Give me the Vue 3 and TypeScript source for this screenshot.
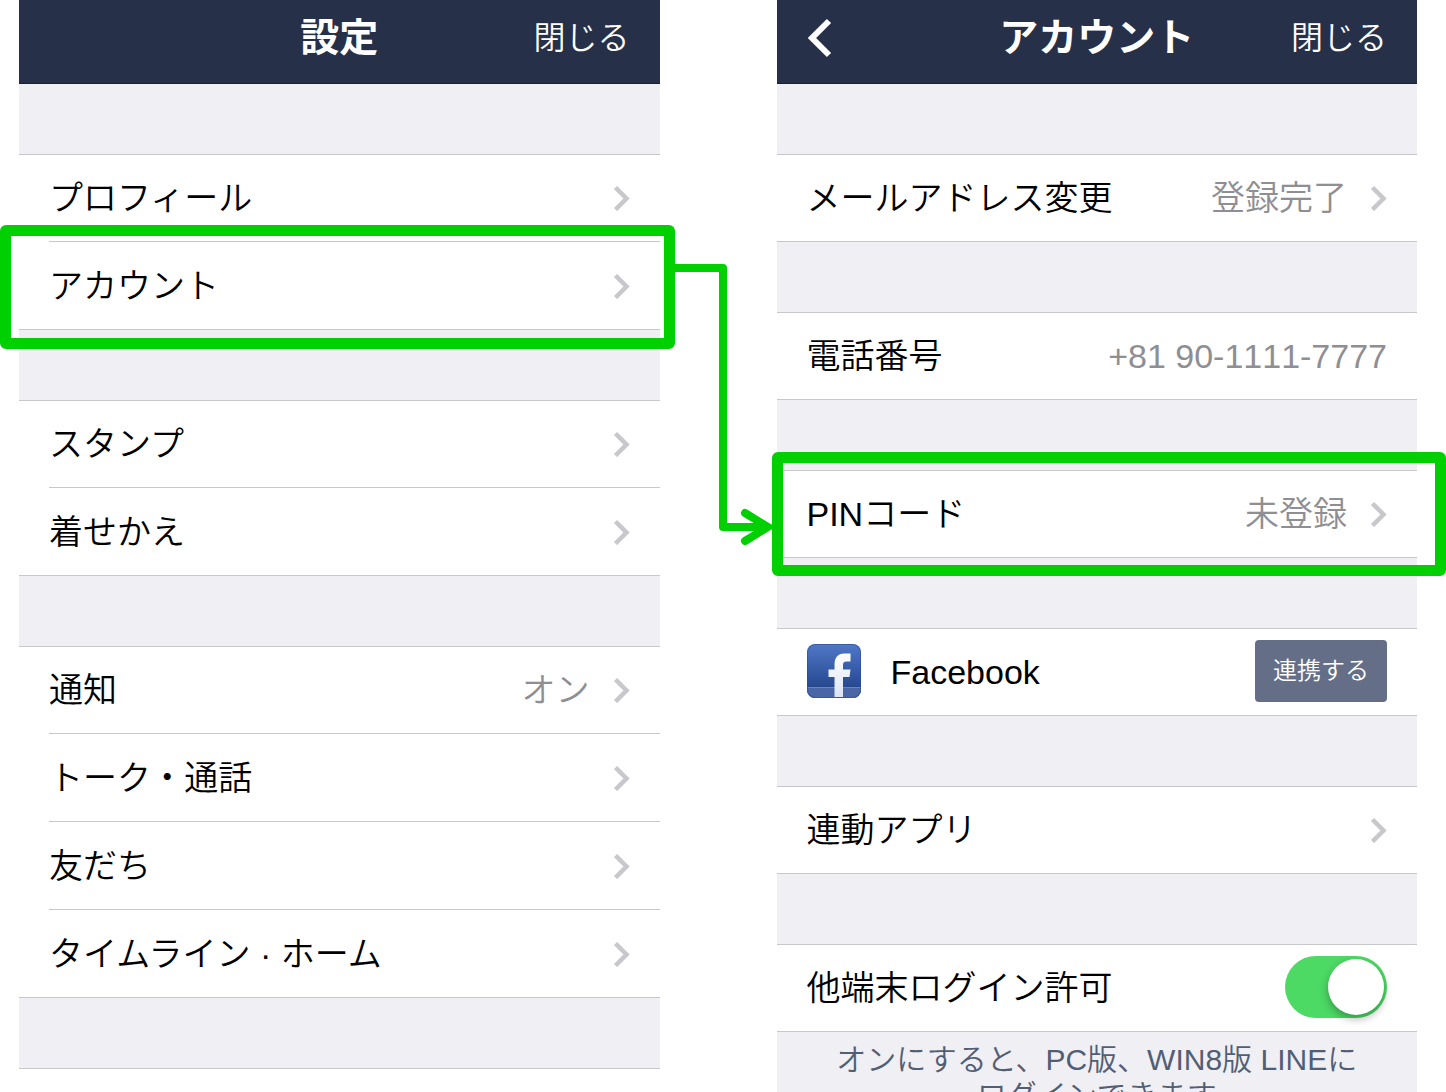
<script setup lang="ts">
import { ref } from 'vue'

interface Row {
  label: string
  value?: string
  kind?: 'link' | 'text' | 'facebook' | 'switch'
  mark?: 'from' | 'to'
}

interface Panel {
  title: string
  back: boolean
  groups: Row[][]
  note?: string[]
}

const allowLogin = ref(true)

const panels: Panel[] = [
  {
    title: '設定',
    back: false,
    groups: [
      [{ label: 'プロフィール' }, { label: 'アカウント', mark: 'from' }],
      [{ label: 'スタンプ' }, { label: '着せかえ' }],
      [
        { label: '通知', value: 'オン' },
        { label: 'トーク・通話' },
        { label: '友だち' },
        { label: 'タイムライン · ホーム' },
      ],
    ],
  },
  {
    title: 'アカウント',
    back: true,
    groups: [
      [{ label: 'メールアドレス変更', value: '登録完了' }],
      [{ label: '電話番号', value: '+81 90-1111-7777', kind: 'text' }],
      [{ label: 'PINコード', value: '未登録', mark: 'to' }],
      [{ label: 'Facebook', kind: 'facebook' }],
      [{ label: '連動アプリ' }],
      [{ label: '他端末ログイン許可', kind: 'switch' }],
    ],
    note: ['オンにすると、PC版、WIN8版 LINEに', 'ログインできます'],
  },
]

const isLink = (row: Row): boolean => !row.kind || row.kind === 'link'
</script>

<template>
  <main class="page" lang="ja">
    <section v-for="panel in panels" :key="panel.title" class="panel">
      <header class="bar">
        <button v-if="panel.back" class="back" type="button" aria-label="戻る">
          <svg width="26" height="40" viewBox="0 0 26 40" fill="none">
            <path d="M22 3 L5 20 L22 37" stroke="#fff" stroke-width="6" />
          </svg>
        </button>
        <h1 class="title">{{ panel.title }}</h1>
        <button class="close" type="button">閉じる</button>
      </header>

      <ul v-for="(group, g) in panel.groups" :key="g" class="group">
        <li v-for="row in group" :key="row.label" class="row">
          <component
            :is="isLink(row) ? 'a' : row.kind === 'switch' ? 'label' : 'div'"
            class="cell"
            :href="isLink(row) ? '#' : undefined"
          >
            <svg v-if="row.kind === 'facebook'" class="logo" width="54" height="54" viewBox="0 0 54 54">
              <defs>
                <linearGradient id="fb-blue" x1="0" y1="0" x2="0" y2="1">
                  <stop offset="0" stop-color="#5078c8" />
                  <stop offset="1" stop-color="#1c3c80" />
                </linearGradient>
                <linearGradient id="fb-white" x1="0" y1="0" x2="0" y2="1">
                  <stop offset="0" stop-color="#fff" />
                  <stop offset="1" stop-color="#dde3f4" />
                </linearGradient>
                <clipPath id="fb-clip"><rect width="54" height="54" rx="8" /></clipPath>
              </defs>
              <g clip-path="url(#fb-clip)">
                <rect width="54" height="54" fill="url(#fb-blue)" />
                <rect y="44" width="54" height="10" fill="#4a66a6" />
                <rect y="43" width="54" height="1" fill="#6c84b8" />
                <path
                  d="M27.5 53V33H21.5V25.500H27.500V21C27.500 13.500 31 9.500 37 9.500H43.500V17.500H39.500C37 17.500 36 18.500 36 21V25.500H43.500L42.500 33H36V53Z"
                  fill="url(#fb-white)"
                />
                <rect x=".5" y=".5" width="53" height="53" rx="8" fill="none" stroke="#2c4c90" stroke-opacity=".6" />
              </g>
            </svg>
            <span class="label">{{ row.label }}</span>
            <span v-if="row.value" class="value">{{ row.value }}</span>
            <svg v-if="isLink(row)" class="chevron" width="18" height="26" viewBox="0 0 18 26" fill="none">
              <path d="M3.500 2.500 L14.500 13.500 L3.500 24.500" stroke="#c7c7cc" stroke-width="4.500" />
            </svg>
            <button v-if="row.kind === 'facebook'" class="connect" type="button">連携する</button>
            <input v-if="row.kind === 'switch'" v-model="allowLogin" class="switch" type="checkbox" role="switch" />
          </component>
          <span v-if="row.mark" class="mark" :class="row.mark"></span>
          <svg v-if="row.mark === 'from'" class="arrow" width="100" height="286" viewBox="0 0 100 286" fill="none">
            <g stroke="#00d000" stroke-width="8">
              <path d="M0 8H49V267H90" stroke-linejoin="round" />
              <path d="M71 253L94 267L71 281" stroke-linecap="round" stroke-linejoin="miter" />
            </g>
          </svg>
        </li>
      </ul>

      <p v-if="panel.note" class="note">
        <template v-for="(line, n) in panel.note" :key="line"><br v-if="n" />{{ line }}</template>
      </p>
      <div v-else class="rest"></div>
    </section>
  </main>
</template>

<style>
body {
  margin: 0;
  background: #fff;
}
</style>

<style scoped>
.page {
  display: flex;
  gap: 117px;
  box-sizing: border-box;
  height: 100vh;
  padding: 0 29px 0 19px;
  overflow: hidden;
  font-family: 'Liberation Sans', 'Noto Sans CJK JP', sans-serif;
  font-size: 34px;
  font-weight: 350;
  line-height: 44px;
  color: #000;
}

.page * {
  box-sizing: border-box;
}

.panel {
  display: flex;
  flex: 1;
  flex-direction: column;
  min-width: 0;
  background: #efeff4;
}

.bar {
  display: grid;
  flex: none;
  grid-template-columns: 1fr auto 1fr;
  align-items: center;
  height: 84px;
  padding: 0 30px 8px;
  border-bottom: 1px solid #182036;
  background: #263048;
  color: #fff;
}

button {
  margin: 0;
  padding: 0;
  border: 0;
  background: none;
  color: #fff;
  font-family: inherit;
  font-weight: inherit;
}

.back {
  justify-self: start;
  height: 40px;
}

.back svg {
  display: block;
}

.title {
  grid-column: 2;
  margin: 0;
  font-size: 39px;
  font-weight: 700;
  line-height: 44px;
}

.close {
  grid-column: 3;
  justify-self: end;
  font-size: 32px;
  line-height: 44px;
}

.group {
  flex: none;
  margin: 70px 0 0;
  padding: 0;
  list-style: none;
}

.row {
  position: relative;
  display: flex;
  height: 88px;
  padding-left: 30px;
  background: #fff;
}

.row:first-child {
  border-top: 1px solid #c8c7cc;
}

.row:last-child {
  border-bottom: 1px solid #c8c7cc;
}

.cell {
  display: flex;
  flex: 1;
  align-items: center;
  padding-right: 30px;
  color: inherit;
  text-decoration: none;
}

.row:not(:last-child) .cell {
  border-bottom: 1px solid #c8c7cc;
}

.logo,
.connect,
.switch {
  margin: 0 0 2px;
}

.logo {
  margin-right: 30px;
}

.label {
  flex: 1;
  white-space: nowrap;
}

.value {
  color: #8e8e93;
  font-kerning: none;
}

.chevron {
  margin-left: 22px;
}

.connect {
  width: 132px;
  height: 62px;
  padding-bottom: 6px;
  border-radius: 4px;
  background: #646f87;
  font-size: 24px;
}

.switch {
  width: 102px;
  height: 62px;
  padding: 3px;
  border-radius: 31px;
  appearance: none;
  background: #e5e5ea;
}

.switch::before {
  display: block;
  width: 56px;
  height: 56px;
  border-radius: 50%;
  background: #fff;
  box-shadow: 0 4px 8px rgba(0, 0, 0, 0.3);
  content: '';
}

.switch:checked {
  background: #4cd964;
}

.switch:checked::before {
  margin-left: auto;
}

.mark {
  position: absolute;
  z-index: 1;
  border: 11px solid #00d000;
  border-radius: 6px;
  pointer-events: none;
}

.mark.from {
  inset: -17px -15px -20px -19px;
}

.mark.to {
  inset: -19px -29px -19px -5px;
}

.arrow {
  position: absolute;
  top: 18px;
  left: calc(100% + 14px);
  z-index: 1;
}

.note {
  margin: 0;
  padding: 10px 30px;
  color: #525e74;
  font-size: 30px;
  line-height: 36px;
  text-align: center;
}

.rest {
  flex: 1;
  margin-top: 70px;
  border-top: 1px solid #c8c7cc;
  background: #fff;
}
</style>
